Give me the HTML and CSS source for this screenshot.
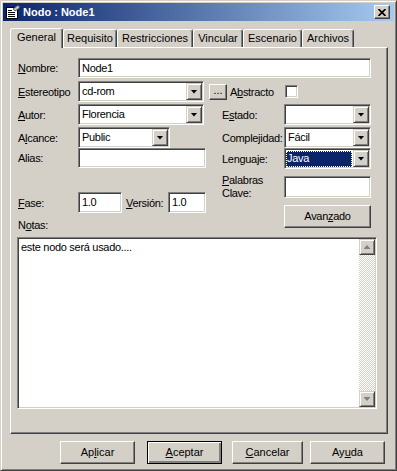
FILE: index.html
```html
<!DOCTYPE html>
<html>
<head>
  <meta charset="utf-8">
  <link rel="stylesheet" href="styles.css">
</head>
<body>
  <div class="window">
    <div class="titlebar">
      <svg class="appicon" width="16" height="16" viewBox="0 0 16 16">
        <rect x="1.5" y="3.5" width="11" height="11" fill="#fff" stroke="#000"/>
        <path d="M3 6.5h4M3 8.5h7M3 10.5h7M3 12.5h7" stroke="#000"/>
        <path d="M8 5 L12.5 1.5 L15 2.5 L14 4.5 L10 7 Z" fill="#C0C0C0" stroke="#404040" stroke-width=".8"/>
      </svg>
      <span class="title">Nodo : Node1</span>
      <div class="close">
        <svg width="8" height="7" viewBox="0 0 8 7"><path d="M0.5 0 L7.5 7 M7.5 0 L0.5 7" stroke="#000" stroke-width="1.7"/></svg>
      </div>
    </div>

    <div class="tabs">
      <div class="tab active">General</div>
      <div class="tab">Requisito</div>
      <div class="tab">Restricciones</div>
      <div class="tab">Vincular</div>
      <div class="tab">Escenario</div>
      <div class="tab">Archivos</div>
    </div>

    <div class="panel">
      <div class="row">
        <span class="lbl"><u>N</u>ombre:</span>
        <div class="field name">Node1</div>
      </div>

      <div class="row r2">
        <span class="lbl"><u>E</u>stereotipo</span>
        <div class="combo w126"><span class="val">cd-rom</span><span class="arrow"></span></div>
        <div class="dots">...</div>
        <span class="abs">A<u>b</u>stracto</span>
        <span class="check"></span>
      </div>

      <div class="cols">
        <div class="left">
          <div class="row">
            <span class="lbl"><u>A</u>utor:</span>
            <div class="combo w126"><span class="val">Florencia</span><span class="arrow"></span></div>
          </div>
          <div class="row gap2">
            <span class="lbl">A<u>l</u>cance:</span>
            <div class="combo w92"><span class="val">Public</span><span class="arrow"></span></div>
          </div>
          <div class="row">
            <span class="lbl">Alias:</span>
            <div class="field w128"></div>
          </div>
          <div class="row fase">
            <span class="lbl"><u>F</u>ase:</span>
            <div class="field w44 tall">1.0</div>
            <span class="lbl-v"><u>V</u>ersión:</span>
            <div class="field w38 tall">1.0</div>
          </div>
          <div class="notas">N<u>o</u>tas:</div>
        </div>

        <div class="right">
          <div class="row">
            <span class="rlbl">E<u>s</u>tado:</span>
            <div class="combo w87"><span class="val"></span><span class="arrow"></span></div>
          </div>
          <div class="row gap2">
            <span class="rlbl">Complejidad:</span>
            <div class="combo w87"><span class="val">Fácil</span><span class="arrow"></span></div>
          </div>
          <div class="row">
            <span class="rlbl">Lenguaje:</span>
            <div class="combo w87"><span class="val sel">Java</span><span class="arrow"></span></div>
          </div>
          <div class="row palabras">
            <span class="rlbl two"><u>P</u>alabras<br>Clave:</span>
            <div class="field w87 kw"></div>
          </div>
          <div class="row avz">
            <span class="rlbl"></span>
            <div class="btn w87">Avan<u>z</u>ado</div>
          </div>
        </div>
      </div>

      <div class="memo">
        <div class="memo-text">este nodo será usado....</div>
        <div class="vscroll">
          <div class="sbtn"><span class="up"></span></div>
          <div class="track"></div>
          <div class="sbtn"><span class="down"></span></div>
        </div>
      </div>
    </div>

    <div class="buttons">
      <div class="btn push">Ap<u>l</u>icar</div>
      <div class="btn push default"><u>A</u>ceptar</div>
      <div class="btn push cancel"><u>C</u>ancelar</div>
      <div class="btn push">Ay<u>u</u>da</div>
    </div>
  </div>
</body>
</html>
```

FILE: styles.css
```css
body {
  margin: 0;
  background: #D4D0C8;
  font: 11px "Liberation Sans", Arial, sans-serif;
  color: #000;
}

.window {
  width: 397px;
  height: 471px;
  box-sizing: border-box;
  border: 1px solid;
  border-color: #D4D0C8 #404040 #404040 #D4D0C8;
  box-shadow: inset 1px 1px #fff, inset -1px -1px #808080;
  padding: 2px;
  display: flex;
  flex-direction: column;
}

/* title bar */
.titlebar {
  height: 18px;
  flex: none;
  display: flex;
  align-items: center;
  padding: 0 4px 0 2px;
  background: linear-gradient(to right, #0A246A, #A6CAF0);
  color: #fff;
  font-weight: bold;
}

.appicon {
  flex: none;
}

.title {
  margin-left: 2px;
}

.close {
  margin-left: auto;
  width: 16px;
  height: 14px;
  box-sizing: border-box;
  background: #D4D0C8;
  border: 1px solid;
  border-color: #fff #404040 #404040 #fff;
  box-shadow: inset -1px -1px #808080;
  display: flex;
  align-items: center;
  justify-content: center;
}

/* tabs */
.tabs {
  display: flex;
  align-items: flex-end;
  height: 20px;
  margin: 7px 0 0 7px;
  position: relative;
  z-index: 1;
}

.tab {
  height: 18px;
  margin-bottom: 1px;
  box-sizing: border-box;
  border: 1px solid;
  border-bottom: none;
  border-color: #fff #404040 #fff #fff;
  border-radius: 3px 3px 0 0;
  box-shadow: inset -1px 0 #808080;
  background: #D4D0C8;
  text-align: center;
  line-height: 16px;
}

.tab:nth-child(1) { width: 53px; }
.tab:nth-child(2) { width: 54px; }
.tab:nth-child(3) { width: 76px; }
.tab:nth-child(4) { width: 50px; }
.tab:nth-child(5) { width: 59px; }
.tab:nth-child(6) { width: 52px; }

.tab.active {
  height: 20px;
  margin-bottom: 0;
  line-height: 17px;
}

/* panel */
.panel {
  margin: -1px 0 0 7px;
  width: 378px;
  height: 387px;
  flex: none;
  box-sizing: border-box;
  border: 1px solid;
  border-color: #fff #404040 #404040 #fff;
  box-shadow: inset -1px -1px #808080;
  padding: 10px 16px 0 7px;
  letter-spacing: -0.3px;
}

.row {
  display: flex;
  align-items: center;
}

.r2 {
  margin-top: 3px;
}

.gap2 {
  margin-top: 2px;
}

.lbl {
  width: 60px;
  flex: none;
  white-space: nowrap;
}

.rlbl {
  width: 62px;
  flex: none;
  white-space: nowrap;
}

.rlbl.two {
  line-height: 13px;
}

.field {
  height: 20px;
  box-sizing: border-box;
  background: #fff;
  border: 1px solid;
  border-color: #808080 #fff #fff #808080;
  box-shadow: inset 1px 1px #404040, inset -1px -1px #D4D0C8;
  padding: 0 3px;
  line-height: 18px;
}

.field.name {
  flex: 1;
}

.field.tall {
  height: 21px;
  line-height: 19px;
}

.w126 { width: 126px; }
.w128 { width: 128px; }
.w92 { width: 92px; }
.w87 { width: 87px; }
.w44 { width: 44px; }
.w38 { width: 38px; }

.combo {
  height: 21px;
  box-sizing: border-box;
  display: flex;
  align-items: stretch;
  background: #fff;
  border: 1px solid;
  border-color: #808080 #fff #fff #808080;
  box-shadow: inset 1px 1px #404040, inset -1px -1px #D4D0C8;
  padding: 1px;
}

.combo .val {
  flex: 1;
  line-height: 17px;
  padding-left: 2px;
}

.combo .val.sel {
  margin: 1px 1px 0 0;
  padding-left: 1px;
  line-height: 15px;
  background: #0A246A;
  color: #fff;
  outline: 1px dotted #fff;
  outline-offset: -1px;
}

.arrow,
.sbtn {
  width: 16px;
  flex: none;
  box-sizing: border-box;
  background: #D4D0C8;
  border: 1px solid;
  border-color: #D4D0C8 #404040 #404040 #D4D0C8;
  box-shadow: inset 1px 1px #fff, inset -1px -1px #808080;
  display: flex;
  align-items: center;
  justify-content: center;
}

.arrow::after {
  content: "";
  width: 7px;
  height: 4px;
  background: #000;
  clip-path: polygon(0 0, 7px 0, 3.5px 4px);
}

.dots {
  width: 18px;
  height: 16px;
  margin-left: 5px;
  box-sizing: border-box;
  border: 1px solid;
  border-color: #fff #404040 #404040 #fff;
  box-shadow: inset -1px -1px #808080;
  text-align: center;
  line-height: 11px;
  letter-spacing: 0;
}

.abs {
  margin-left: 3px;
  width: 55px;
}

.check {
  width: 13px;
  height: 13px;
  box-sizing: border-box;
  background: #fff;
  border: 1px solid;
  border-color: #808080 #fff #fff #808080;
  box-shadow: inset 1px 1px #404040, inset -1px -1px #D4D0C8;
}

.cols {
  display: flex;
  gap: 16px;
  margin-top: 2px;
}

.left {
  width: 188px;
}

.right {
  width: 149px;
}

.fase {
  margin-top: 24px;
}

.lbl-v {
  margin-left: 4px;
  width: 42px;
}

.notas {
  margin-top: 6px;
  line-height: 13px;
}

.palabras {
  margin-top: 5px;
}

.kw {
  height: 22px;
}

.avz {
  margin-top: 5px;
}

.btn {
  height: 23px;
  box-sizing: border-box;
  border: 1px solid;
  border-color: #fff #404040 #404040 #fff;
  box-shadow: inset -1px -1px #808080;
  background: #D4D0C8;
  text-align: center;
  line-height: 20px;
}

/* notes area */
.memo {
  margin: 5px 0 0 -1px;
  width: 360px;
  height: 172px;
  box-sizing: border-box;
  display: flex;
  background: #fff;
  border: 1px solid;
  border-color: #808080 #fff #fff #808080;
  box-shadow: inset 1px 1px #404040, inset -1px -1px #D4D0C8;
  padding: 1px;
}

.memo-text {
  flex: 1;
  padding: 2px 0 0 2px;
  line-height: 13px;
}

.vscroll {
  width: 16px;
  display: flex;
  flex-direction: column;
}

.sbtn {
  height: 16px;
}

.track {
  flex: 1;
  background: repeating-conic-gradient(#D4D0C8 0 25%, #fff 0 50%) 0 0 / 2px 2px;
}

.up,
.down {
  width: 7px;
  height: 4px;
  background: #808080;
  filter: drop-shadow(1px 1px 0 #fff);
}

.up {
  clip-path: polygon(3.5px 0, 7px 4px, 0 4px);
}

.down {
  clip-path: polygon(0 0, 7px 0, 3.5px 4px);
}

/* bottom buttons */
.buttons {
  display: flex;
  justify-content: flex-end;
  margin: 7px 9px 0 0;
}

.push {
  width: 75px;
  margin-left: 12px;
}

.push.default {
  outline: 1px solid #000;
  outline-offset: -1px;
  border-color: #fff #404040 #404040 #fff;
  box-shadow: inset 1px 1px #fff, inset -2px -2px #808080;
}

.push.cancel {
  width: 71px;
  margin-left: 10px;
}

.push:last-child {
  margin-left: 7px;
}
```
